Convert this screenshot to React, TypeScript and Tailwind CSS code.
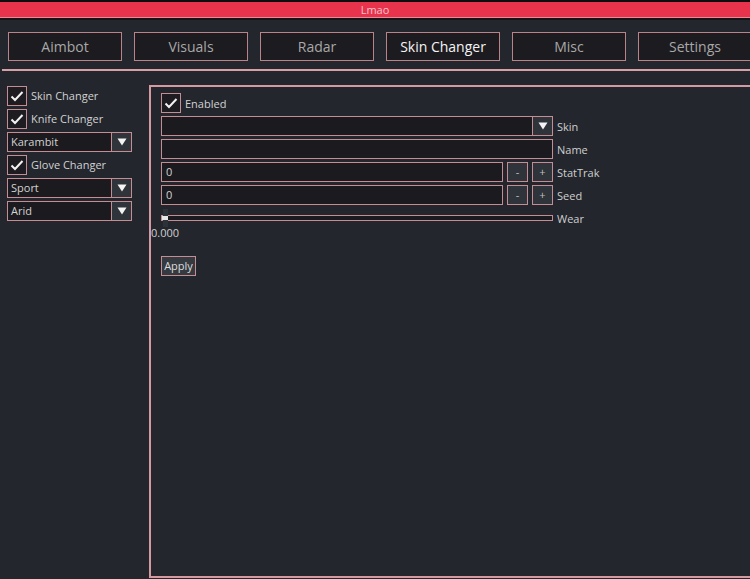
import React from "react";

const font = { fontFamily: '"Open Sans", "Noto Sans", sans-serif' };

function Check() {
  return (
    <div className="w-[20px] h-[20px] border border-[#c48c93] bg-[#1e1c21] flex items-center justify-center shrink-0">
      <svg width="14" height="12" viewBox="0 0 14 12">
        <path d="M1.5 6.5 L5 10 L12.5 2" fill="none" stroke="#f2f2f2" strokeWidth="2" />
      </svg>
    </div>
  );
}

function CheckRow({ label }: { label: string }) {
  return (
    <div className="flex items-center h-[20px] gap-[4px]">
      <Check />
      <span className="text-[11px] text-[#d2d2d2] pt-[1px]">{label}</span>
    </div>
  );
}

function Dropdown({ value, w }: { value: string; w: string }) {
  return (
    <div className={`flex h-[20px] border border-[#c48c93] bg-[#1b1a1e] ${w}`}>
      <div className="flex-1 flex items-center pl-[3px] pt-[1px] text-[11px] text-[#d2d2d2]">{value}</div>
      <div className="w-[20px] border-l border-[#c48c93] bg-[#2f343b] flex items-center justify-center">
        <svg width="10" height="8" viewBox="0 0 10 8">
          <path d="M0.5 0.5 L9.5 0.5 L5 7.5 Z" fill="#f4f4f4" />
        </svg>
      </div>
    </div>
  );
}

function Label({ text }: { text: string }) {
  return <span className="text-[11px] text-[#cfcfcf] ml-[4px] pt-[2px]">{text}</span>;
}

function Tab({ label, active }: { label: string; active?: boolean }) {
  return (
    <div
      className={`w-[114px] h-[29px] shrink-0 border border-[#b98389] bg-[#1c1b1f] flex items-center justify-center text-[14px] ${
        active ? "text-[#f4f4f4]" : "text-[#a8a8a8]"
      }`}
    >
      {label}
    </div>
  );
}

function SmallBtn({ t }: { t: string }) {
  return (
    <div className="w-[21px] h-[20px] border border-[#c48c93] bg-[#2f343b] flex items-center justify-center text-[11px] text-[#bfbfbf]">
      {t}
    </div>
  );
}

export default function App() {
  return (
    <div className="w-[750px] h-[579px] bg-[#23262d] overflow-hidden relative" style={font}>
      {/* title bar */}
      <div className="h-[2px] bg-[#0d0d0f]" />
      <div className="h-[15px] bg-[#e8334c] flex items-center justify-center text-[11px] text-[#f6c4cc] leading-none">
        Lmao
      </div>
      <div className="h-[1px] bg-[#e88a96]" />
      <div className="h-[2px] bg-[#141418]" />

      {/* tabs */}
      <div className="flex gap-[12px] pl-[8px] mt-[12px]">
        <Tab label="Aimbot" />
        <Tab label="Visuals" />
        <Tab label="Radar" />
        <Tab label="Skin Changer" active />
        <Tab label="Misc" />
        <Tab label="Settings" />
      </div>

      {/* separator */}
      <div className="ml-[2px] mt-[8px] h-[2px] bg-[#d7a0a7]" />

      <div className="flex mt-[14px]">
        {/* left column */}
        <div className="w-[149px] shrink-0 pl-[7px] pt-[1px] flex flex-col gap-[3px]">
          <CheckRow label="Skin Changer" />
          <CheckRow label="Knife Changer" />
          <Dropdown value="Karambit" w="w-[125px]" />
          <CheckRow label="Glove Changer" />
          <Dropdown value="Sport" w="w-[125px]" />
          <Dropdown value="Arid" w="w-[125px]" />
        </div>

        {/* main panel */}
        <div className="w-[610px] h-[493px] shrink-0 border-2 border-[#d39aa1] pl-[10px] pt-[6px] flex flex-col gap-[3px]">
          <div className="flex items-center h-[20px] gap-[4px]">
            <Check />
            <span className="text-[11px] text-[#d2d2d2] pt-[2px]">Enabled</span>
          </div>
          <div className="flex items-center">
            <Dropdown value="" w="w-[392px]" />
            <Label text="Skin" />
          </div>
          <div className="flex items-center">
            <div className="w-[392px] h-[20px] border border-[#c48c93] bg-[#1b1a1e]" />
            <Label text="Name" />
          </div>
          <div className="flex items-center">
            <div className="w-[342px] h-[20px] border border-[#c48c93] bg-[#1b1a1e] flex items-center pl-[4px] pt-[1px] text-[11px] text-[#d2d2d2]">
              0
            </div>
            <div className="ml-[4px]"><SmallBtn t="-" /></div>
            <div className="ml-[4px]"><SmallBtn t="+" /></div>
            <Label text="StatTrak" />
          </div>
          <div className="flex items-center">
            <div className="w-[342px] h-[20px] border border-[#c48c93] bg-[#1b1a1e] flex items-center pl-[4px] pt-[1px] text-[11px] text-[#d2d2d2]">
              0
            </div>
            <div className="ml-[4px]"><SmallBtn t="-" /></div>
            <div className="ml-[4px]"><SmallBtn t="+" /></div>
            <Label text="Seed" />
          </div>
          <div className="flex items-center h-[20px]">
            <div className="w-[392px] h-[6px] border border-[#c48c93] bg-[#1b1a1e] relative">
              <div className="absolute left-[1px] top-[-7px] w-[5px] h-[18px] bg-[#2d3138]" />
              <div className="absolute left-[0px] top-[0px] w-[6px] h-[4px] bg-[#e6e6e6]" />
            </div>
            <Label text="Wear" />
          </div>
          <div className="ml-[-10px] mt-[-5px] h-[12px] flex items-center">
            <span className="text-[11px] text-[#cfcfcf] leading-none">0.000</span>
          </div>
          <div className="mt-[15px] w-[35px] h-[20px] border border-[#c48c93] bg-[#353a41] flex items-center justify-center pt-[1px] text-[11px] text-[#dcdcdc]">
            Apply
          </div>
        </div>
      </div>
    </div>
  );
}
